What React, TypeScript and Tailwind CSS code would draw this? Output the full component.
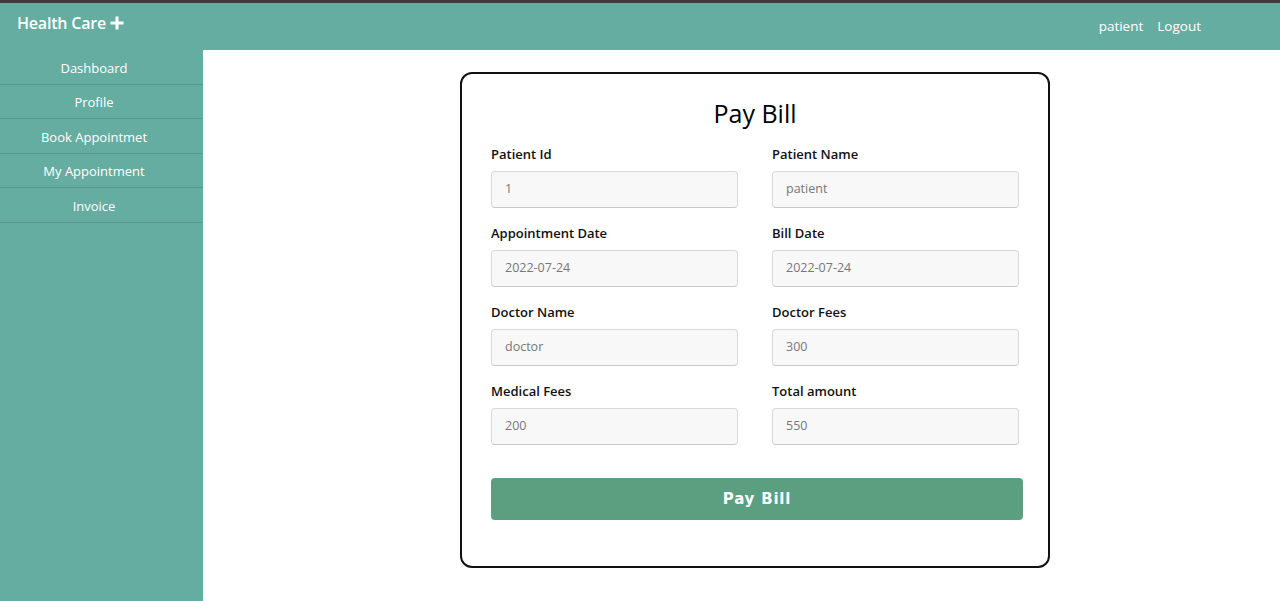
import React from 'react';

interface Field {
  label: string;
  value: string;
}

const fields: Field[] = [
  { label: 'Patient Id', value: '1' },
  { label: 'Patient Name', value: 'patient' },
  { label: 'Appointment Date', value: '2022-07-24' },
  { label: 'Bill Date', value: '2022-07-24' },
  { label: 'Doctor Name', value: 'doctor' },
  { label: 'Doctor Fees', value: '300' },
  { label: 'Medical Fees', value: '200' },
  { label: 'Total amount', value: '550' },
];

const navItems = ['Dashboard', 'Profile', 'Book Appointmet', 'My Appointment', 'Invoice'];

const App: React.FC = () => {
  return (
    <div className="min-h-[601px] flex flex-col bg-white font-['Open_Sans','Noto_Sans',sans-serif]">
      <div className="h-[3px] bg-[#3b3b3b]" />
      <header className="h-[47px] bg-[#65ada0] flex items-start justify-between text-white">
        <div className="flex items-center pl-[17px] pt-[8px]">
          <span className="text-[16px] font-semibold tracking-[-0.2px]">Health Care</span>
          <svg className="ml-[3px] h-[16px] w-[16px]" viewBox="0 0 16 16" fill="none">
            <path d="M8 1.5v13M1.5 8h13" stroke="white" strokeWidth={3} />
          </svg>
        </div>
        <nav className="flex gap-[14px] pr-[79px] pt-[14px] text-[13.5px] leading-[18px]">
          <span>patient</span>
          <span>Logout</span>
        </nav>
      </header>
      <div className="flex flex-1">
        <aside className="w-[203px] bg-[#65ada0] min-h-[551px]">
          {navItems.map((item) => (
            <div
              key={item}
              className="h-[34.5px] flex items-center justify-center pr-[15px] pt-[3px] border-b border-[#57988c] text-white text-[13px]"
            >
              {item}
            </div>
          ))}
        </aside>
        <main className="flex-1 pl-[257px] pt-[22px]">
          <div className="w-[590px] h-[496px] border-2 border-[#111] rounded-[12px] px-[29px] pt-[22px]">
            <h1 className="text-center text-[25px] leading-[34px] font-medium text-black">Pay Bill</h1>
            <div className="grid grid-cols-2 gap-x-[34px] gap-y-[15px] mt-[14px]">
              {fields.map((f) => (
                <div key={f.label}>
                  <label className="block h-[20px] text-[13px] leading-[20px] font-semibold text-[#111]">
                    {f.label}
                  </label>
                  <div className="mt-[7px] h-[37px] flex items-center pl-[13px] bg-[#f8f8f8] border border-[#d9d9d9] border-b-[#c9c9c9] rounded-[4px] text-[12.5px] text-[#777]">
                    {f.value}
                  </div>
                </div>
              ))}
            </div>
            <button
              type="button"
              className="mt-[33px] w-[532px] h-[42px] bg-[#5c9e80] rounded-[4px] text-white text-[15px] font-bold tracking-[0.8px] font-['DejaVu_Sans',sans-serif]"
            >
              Pay Bill
            </button>
          </div>
        </main>
      </div>
    </div>
  );
};

export default App;
